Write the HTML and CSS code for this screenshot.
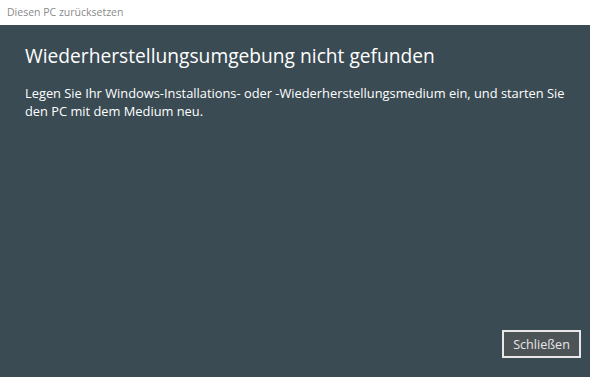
FILE: index.html
```html
<!DOCTYPE html>
<html lang="de">
  <head>
    <title>Diesen PC zurücksetzen</title>
    <meta charset="UTF-8" />
    <link rel="stylesheet" href="styles.css">
  </head>
  <body>
    <div class="titlebar">Diesen PC zurücksetzen</div>
    <div class="panel">
      <div class="content">
        <h1 class="heading">Wiederherstellungsumgebung nicht gefunden</h1>
        <p class="message">Legen Sie Ihr Windows-Installations- oder -Wiederherstellungsmedium ein, und starten Sie den PC mit dem Medium neu.</p>
      </div>
      <div class="actions">
        <button class="closeBtn">Schließen</button>
      </div>
    </div>
  </body>
</html>
```

FILE: styles.css
```css
body {
  margin: 0;
  height: 377px;
  display: flex;
  flex-direction: column;
  font-family: "Open Sans", "Noto Sans", sans-serif;
}
.titlebar {
  height: 25px;
  line-height: 24px;
  padding-left: 7px;
  background-color: #ffffff;
  color: #8a8a8a;
  font-size: 10.5px;
}
.panel {
  flex: 1;
  display: flex;
  flex-direction: column;
  justify-content: space-between;
  background-color: #3a4b53;
  color: #ffffff;
}
.content {
  padding: 17px 10px 0 25px;
}
.heading {
  margin: 0;
  font-size: 19.2px;
  font-weight: normal;
  line-height: 28px;
}
.message {
  margin: 14px 0 0;
  font-size: 12.85px;
  line-height: 18px;
}
.actions {
  display: flex;
  justify-content: flex-end;
  padding: 0 9px 19px 0;
}
.closeBtn {
  width: 79px;
  height: 28px;
  padding: 0;
  border: 2px solid #e8e8e8;
  background-color: #4d5458;
  color: #e6e6e6;
  font-family: "Open Sans", "Noto Sans", sans-serif;
  font-size: 12.6px;
}
```
